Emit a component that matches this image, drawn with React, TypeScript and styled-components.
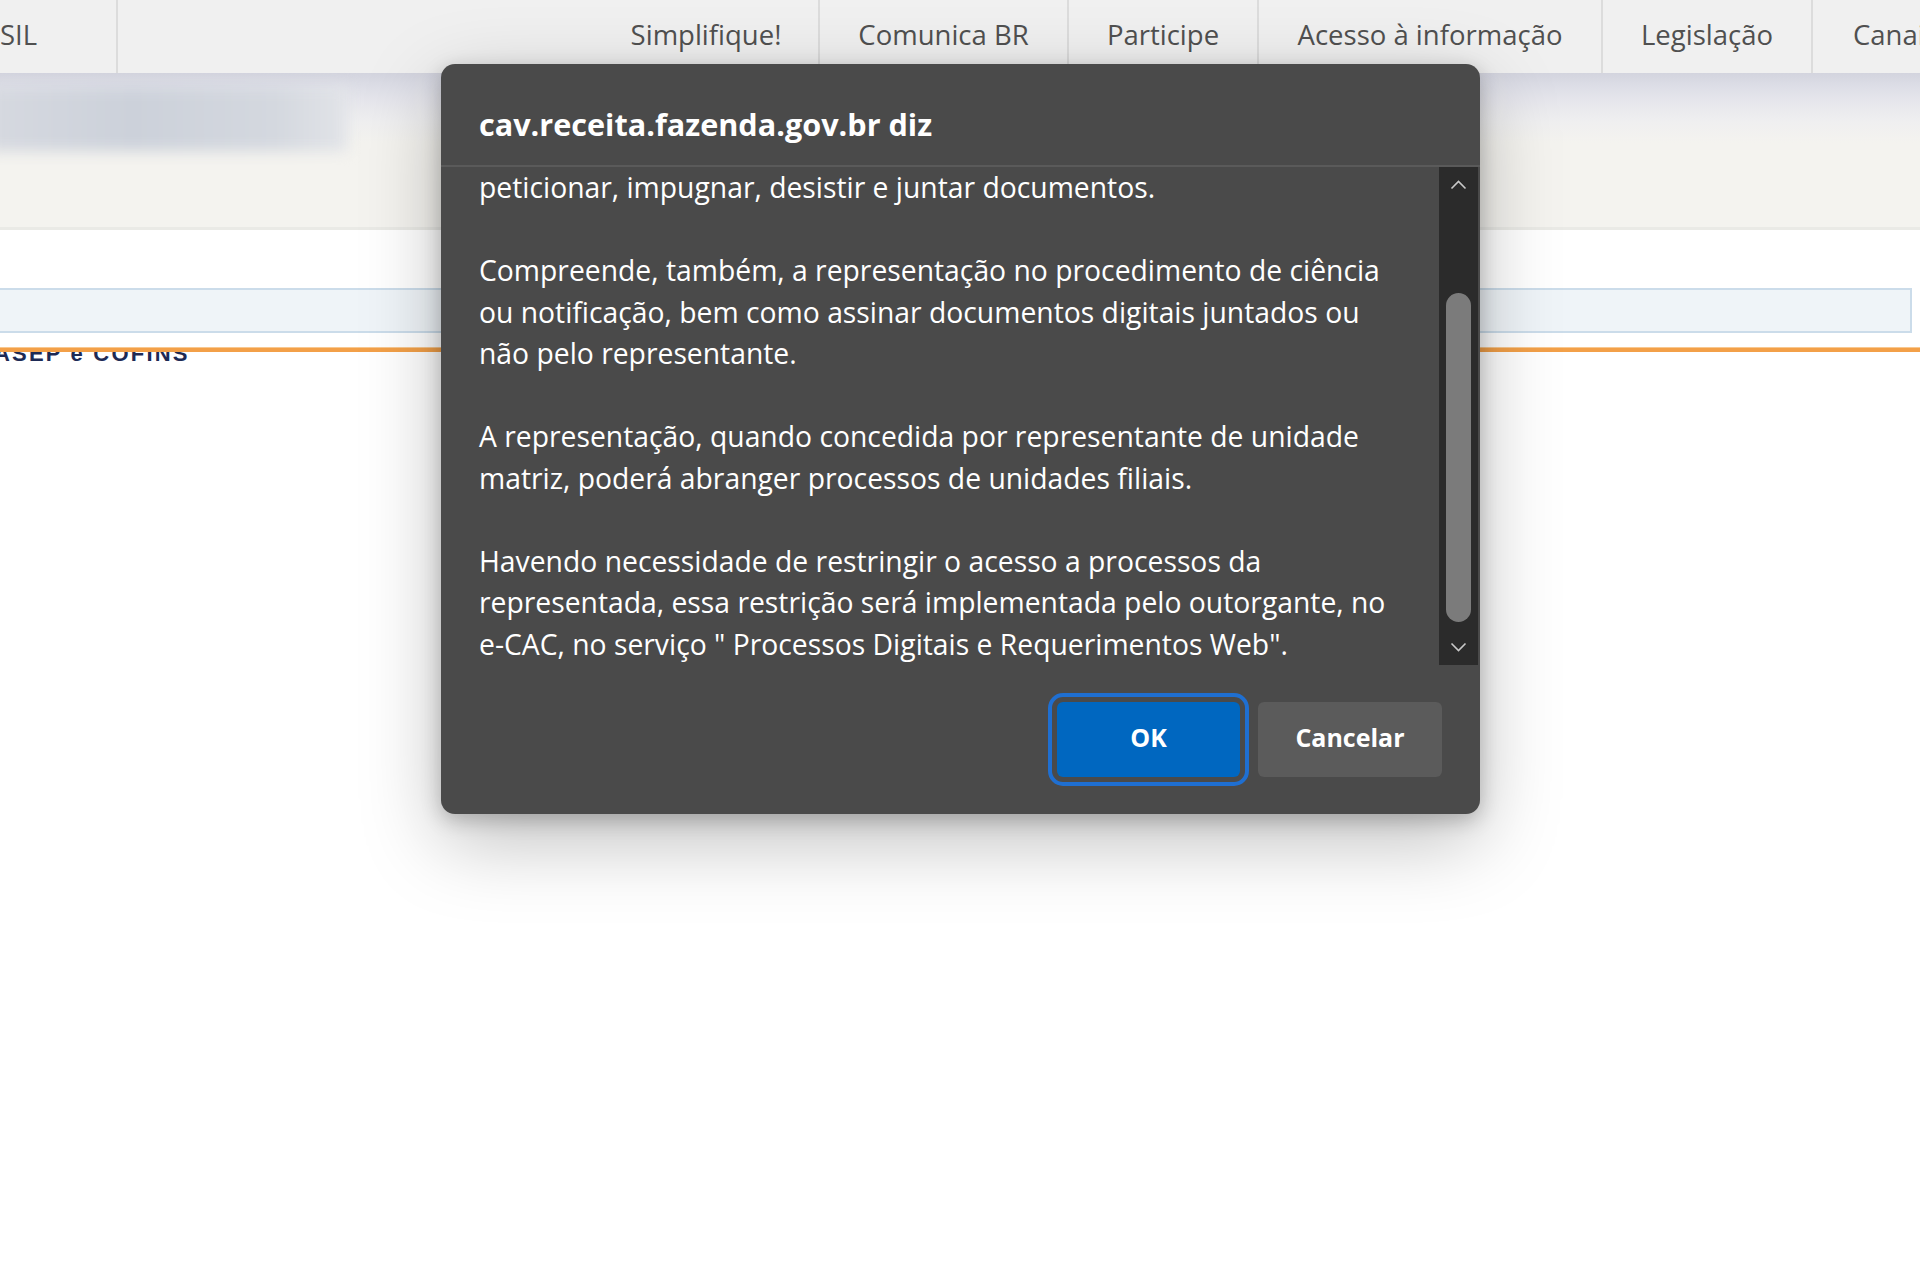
import React from "react";
import styled, { createGlobalStyle } from "styled-components";

const Global = createGlobalStyle`
  html, body { margin: 0; padding: 0; background: #ffffff; }
  body { font-family: "Open Sans", "Noto Sans", sans-serif; }
`;

const Page = styled.div`
  position: relative;
  width: 1920px;
  height: 1280px;
  overflow: hidden;
  background: #ffffff;
`;

const NavBar = styled.nav`
  display: flex;
  height: 73px;
  background: #f0f0f0;
`;

const NavCell = styled.div<{ $w?: number; $left?: boolean; $last?: boolean }>`
  flex: ${(p) => (p.$w ? `0 0 ${p.$w}px` : "1 1 auto")};
  box-sizing: border-box;
  display: flex;
  align-items: center;
  justify-content: ${(p) => (p.$left ? "flex-start" : "center")};
  padding: 0 0 5px ${(p) => (p.$last ? "40px" : "0")};
  border-right: ${(p) => (p.$last ? "none" : "2px solid #dcdcdc")};
  font-size: 27.5px;
  color: #505050;
  white-space: nowrap;
  overflow: hidden;
`;

const NavSpacer = styled.div`
  flex: 1 1 auto;
`;

const Masthead = styled.div`
  height: 157px;
  box-sizing: border-box;
  padding-top: 14px;
  background: linear-gradient(
    to bottom,
    #d3d4de 0px,
    #dcdde6 12px,
    #e6e6ec 28px,
    #efeff0 48px,
    #f4f3ef 70px,
    #f4f3ef 100%
  );
  border-bottom: 3px solid #eaeae6;
`;

const BlurBlock = styled.div`
  width: 360px;
  height: 64px;
  margin-left: -12px;
  background: linear-gradient(to right, #d6d9e0, #ccd1da 40%, #d4d8df 80%, #e2e4e8);
  filter: blur(7px);
`;

const Content = styled.div`
  padding-top: 58px;
`;

const SearchBox = styled.div`
  width: 1912px;
  height: 45px;
  box-sizing: border-box;
  background: #eff4f8;
  border: 2px solid #cbdcea;
  border-left: none;
`;

const OrangeRule = styled.div`
  margin-top: 15px;
  height: 4px;
  background: #f3a048;
  box-shadow: 0 -1px 0 #f8c890;
`;

const CaptionClip = styled.div`
  height: 22px;
  overflow: hidden;
`;

const CaptionText = styled.div`
  margin-top: -9px;
  margin-left: -6px;
  font-family: "Liberation Sans", Arial, sans-serif;
  font-size: 22px;
  font-weight: 700;
  letter-spacing: 2.2px;
  line-height: 22px;
  color: #1d2a55;
  white-space: nowrap;
`;

const Dialog = styled.div`
  position: absolute;
  z-index: 10;
  left: 441px;
  top: 64px;
  width: 1039px;
  box-sizing: border-box;
  background: #4a4a4a;
  border-radius: 14px;
  box-shadow: 0 26px 80px rgba(0, 0, 0, 0.26), 0 6px 20px rgba(0, 0, 0, 0.22);
  color: #ffffff;
  font-family: "Open Sans", "Noto Sans", sans-serif;
  overflow: hidden;
`;

const TitleBar = styled.div`
  height: 103px;
  box-sizing: border-box;
  padding: 40px 38px 0;
  border-bottom: 2px solid #5a5a5a;
  font-size: 30.6px;
  font-weight: 700;
  line-height: 40px;
`;

const Body = styled.div`
  display: flex;
  height: 498px;
`;

const Message = styled.div`
  flex: 1 1 auto;
  padding-left: 38px;
  overflow: hidden;
  white-space: nowrap;
  font-size: 28.3px;
  line-height: 41.5px;
`;

const Paragraph = styled.p`
  margin: 0 0 41.5px;
  &:last-child {
    margin-bottom: 0;
  }
`;

const ScrollTrack = styled.div`
  flex: 0 0 39px;
  margin-right: 2px;
  display: flex;
  flex-direction: column;
  align-items: center;
  background: #2b2b2b;
`;

const ArrowBox = styled.div`
  height: 36px;
  display: flex;
  align-items: center;
  justify-content: center;
`;

const ThumbArea = styled.div`
  flex: 1 1 auto;
  padding-top: 90px;
`;

const Thumb = styled.div`
  width: 25px;
  height: 329px;
  border-radius: 13px;
  background: #7b7b7b;
`;

const Footer = styled.div`
  height: 149px;
  box-sizing: border-box;
  display: flex;
  justify-content: flex-end;
  align-items: center;
  gap: 18px;
  padding: 0 38px;
`;

const Button = styled.button<{ $primary?: boolean }>`
  width: ${(p) => (p.$primary ? 183 : 184)}px;
  height: 75px;
  padding: 0 0 5px;
  border: none;
  border-radius: 6px;
  background: ${(p) => (p.$primary ? "#0067c0" : "#5b5b5b")};
  color: #ffffff;
  font-family: "Open Sans", "Noto Sans", sans-serif;
  font-size: 25px;
  font-weight: 700;
  outline: ${(p) => (p.$primary ? "4px solid #1f6fd1" : "none")};
  outline-offset: 5px;
  cursor: default;
`;

const Chevron = ({ up }: { up?: boolean }) => (
  <svg width="17" height="10" viewBox="0 0 17 10">
    <polyline
      points={up ? "1.5,8.5 8.5,1.5 15.5,8.5" : "1.5,1.5 8.5,8.5 15.5,1.5"}
      fill="none"
      stroke="#c9c9c9"
      strokeWidth="1.6"
    />
  </svg>
);

const navItems: { label: string; w: number }[] = [
  { label: "Simplifique!", w: 226 },
  { label: "Comunica BR", w: 249 },
  { label: "Participe", w: 190 },
  { label: "Acesso à informação", w: 344 },
  { label: "Legislação", w: 210 },
];

export default function App() {
  return (
    <Page>
      <Global />
      <NavBar>
        <NavCell $w={118} $left>
          SIL
        </NavCell>
        <NavSpacer />
        {navItems.map((n) => (
          <NavCell key={n.label} $w={n.w}>
            {n.label}
          </NavCell>
        ))}
        <NavCell $w={107} $left $last>
          Canais
        </NavCell>
      </NavBar>
      <Masthead>
        <BlurBlock />
      </Masthead>
      <Content>
        <SearchBox />
        <OrangeRule />
        <CaptionClip>
          <CaptionText>ASEP e COFINS</CaptionText>
        </CaptionClip>
      </Content>

      <Dialog role="dialog">
        <TitleBar>cav.receita.fazenda.gov.br diz</TitleBar>
        <Body>
          <Message>
            <Paragraph>peticionar, impugnar, desistir e juntar documentos.</Paragraph>
            <Paragraph>
              Compreende, também, a representação no procedimento de ciência
              <br />
              ou notificação, bem como assinar documentos digitais juntados ou
              <br />
              não pelo representante.
            </Paragraph>
            <Paragraph>
              A representação, quando concedida por representante de unidade
              <br />
              matriz, poderá abranger processos de unidades filiais.
            </Paragraph>
            <Paragraph>
              Havendo necessidade de restringir o acesso a processos da
              <br />
              representada, essa restrição será implementada pelo outorgante, no
              <br />
              e-CAC, no serviço " Processos Digitais e Requerimentos Web".
            </Paragraph>
          </Message>
          <ScrollTrack>
            <ArrowBox>
              <Chevron up />
            </ArrowBox>
            <ThumbArea>
              <Thumb />
            </ThumbArea>
            <ArrowBox>
              <Chevron />
            </ArrowBox>
          </ScrollTrack>
        </Body>
        <Footer>
          <Button $primary>OK</Button>
          <Button>Cancelar</Button>
        </Footer>
      </Dialog>
    </Page>
  );
}
